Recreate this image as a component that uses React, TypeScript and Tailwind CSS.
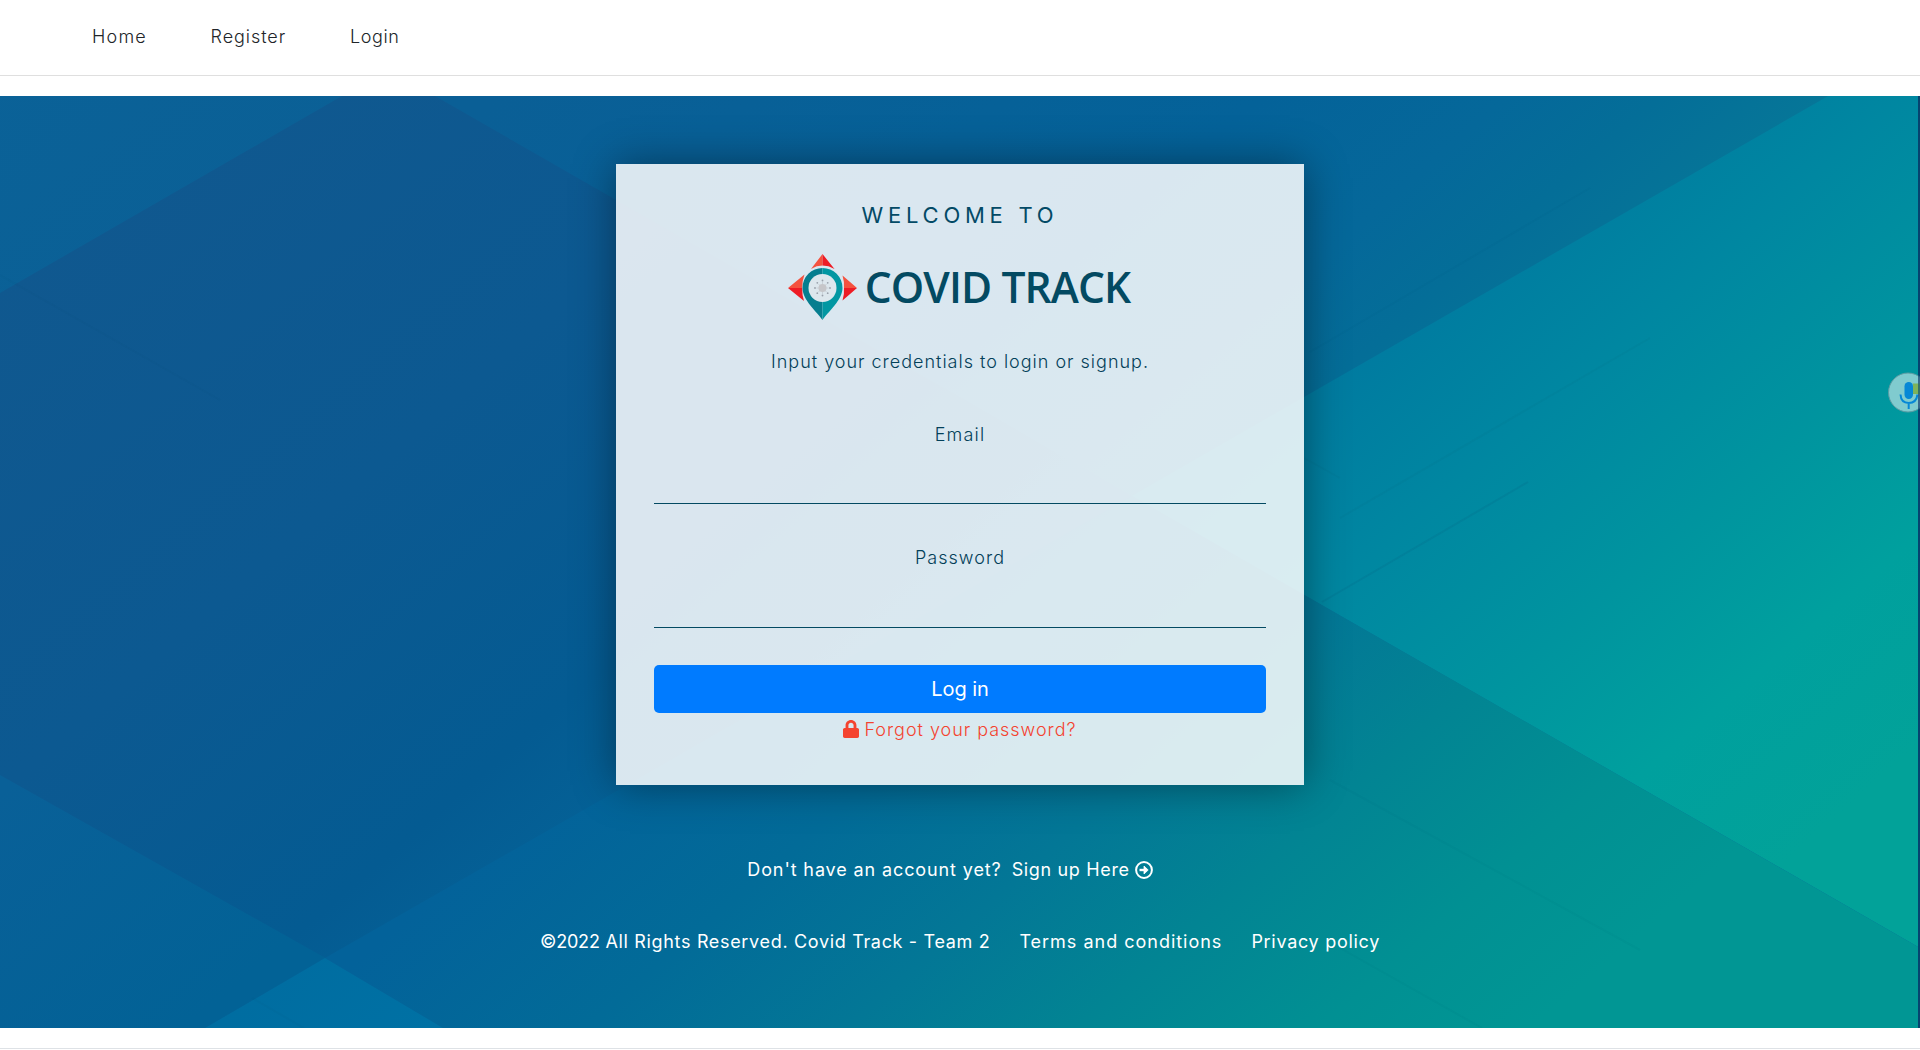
import { FaLock } from "react-icons/fa";

function Backdrop() {
  const gradients: Record<string, [number, string][]> = {
    topLeft: [[0, "#0a6298"], [0.25, "#0b5f95"]],
    diamond: [[0.1, "#10588f"], [0.3, "#0c5991"], [0.45, "#045b92"], [0.55, "#05669a"]],
    top: [[0.2, "#0a5f96"], [0.45, "#046299"], [0.53, "#05689a"], [0.58, "#046e98"], [0.64, "#067798"]],
    right: [[0.56, "#0078a0"], [0.66, "#0087a1"], [0.75, "#00949f"], [0.83, "#00a09e"], [0.91, "#02a299"]],
    bottom: [[0.48, "#03629a"], [0.58, "#026b98"], [0.665, "#037796"], [0.74, "#028493"], [0.82, "#019093"], [0.89, "#019694"]],
    left: [[0.3, "#096098"], [0.45, "#026296"]],
    tip: [[0.44, "#006ca0"], [0.53, "#0071a4"]],
  };
  return (
    <svg className="absolute inset-0 h-full w-full" viewBox="0 96 1920 932" preserveAspectRatio="none" aria-hidden="true">
      <defs>
        {Object.entries(gradients).map(([id, stops]) => (
          <linearGradient key={id} id={id} gradientUnits="userSpaceOnUse" x1="0" y1="0" x2="1310" y2="1512">
            {stops.map(([o, c]) => (
              <stop key={o} offset={o} stopColor={c} />
            ))}
          </linearGradient>
        ))}
      </defs>
      <rect x="0" y="96" width="1920" height="932" fill="url(#diamond)" />
      <path d="M0 96H342L0 293Z" fill="url(#topLeft)" />
      <path d="M435 96H1830L1132 496Z" fill="url(#top)" />
      <path d="M1829 95.500H1920V948L1131.500 496Z" fill="url(#right)" />
      <path d="M1132 496L1920 948V1028H443L325 958Z" fill="url(#bottom)" />
      <path d="M0 775L325.500 958L205 1028H0Z" fill="url(#left)" />
      <path d="M325 958L443 1028H205Z" fill="url(#tip)" />
      <g stroke="#06466b" fill="none" strokeWidth="2">
        <path d="M1322 602L1528 482" opacity=".1" />
        <path d="M1340 518L1650 338" opacity=".05" />
        <path d="M1310 352L1590 188" opacity=".03" />
        <path d="M1304 458L1340 478" opacity=".05" />
        <path d="M1340 948L1482 1028M1330 780L1640 950" opacity=".03" />
        <path d="M252 998L304 1028M0 275L220 400" opacity=".04" />
      </g>
      <rect x="1918" y="96" width="2" height="932" fill="#06436f" />
    </svg>
  );
}

function Logo() {
  return (
    <div className="mr-[2px] flex h-[66px] items-center">
      <svg className="h-[66px] w-[69px] shrink-0" viewBox="0 0 69 66" aria-hidden="true">
        <path d="M34.500 0L23 15Q28.500 11.600 34.500 11.600Z" fill="#f4523f" />
        <path d="M34.500 0L46.500 15Q40.500 11.600 34.500 11.600Z" fill="#ee1c25" />
        <path d="M0 34L16.500 20.500Q14 27 14.200 34Z" fill="#f4523f" />
        <path d="M0 34L16 47Q14 41 14.200 34Z" fill="#ee1c25" />
        <path d="M69 34L54.500 21.500Q56.500 28 56 34Z" fill="#f4523f" />
        <path d="M69 34L54.500 46.500Q56.500 40 56 34Z" fill="#ee1c25" />
        <path d="M34.500 14A20 20 0 0 0 14.500 34C14.500 46 29 58 34.500 66Z" fill="#067e8f" />
        <path d="M34.500 14A20 20 0 0 1 54.500 34C54.500 46 40 58 34.500 66Z" fill="#0297a2" />
        <circle cx="34.500" cy="34" r="14" fill="#dde7ed" />
        <g stroke="#b7bcc2">
          <path d="M34.500 28V40M28.500 34H40.500M30.500 30L38.500 38M38.500 30L30.500 38" strokeWidth=".8" opacity=".6" />
          <circle cx="34.500" cy="34" r="4" fill="#c6c6c9" stroke="none" />
          <g stroke="none" fill="#9aa1ab">
            <circle cx="34.500" cy="26.500" r=".9" />
            <circle cx="34.500" cy="41.500" r=".9" />
            <circle cx="27" cy="34" r=".9" />
            <circle cx="42" cy="34" r=".9" />
            <circle cx="29.300" cy="28.800" r=".9" />
            <circle cx="39.700" cy="28.800" r=".9" />
            <circle cx="29.300" cy="39.200" r=".9" />
            <circle cx="39.700" cy="39.200" r=".9" />
          </g>
        </g>
      </svg>
      <span className="ml-[8px] whitespace-nowrap font-['Open_Sans',sans-serif] text-[42.5px] leading-[66px] font-semibold tracking-[-0.9px] text-[#034a62]">
        COVID TRACK
      </span>
    </div>
  );
}

function VoiceBadge() {
  return (
    <svg className="absolute top-[276px] right-0 h-[42px] w-[32px]" viewBox="0 0 32 42" aria-hidden="true">
      <circle cx="20" cy="20.500" r="19.500" fill="#ffffff" fillOpacity=".5" stroke="#5c9ca3" strokeWidth="1" />
      <path d="M25 11.500H32V22H25Z" fill="#7db35c" />
      <rect x="16.500" y="10" width="8.500" height="17" rx="4.200" fill="#0688d6" />
      <path d="M12.500 22.500Q13 31 20.700 31T29.500 22.500M20.700 31V37" fill="none" stroke="#0688d6" strokeWidth="2" />
      <rect x="30" y="0" width="2" height="42" fill="#06436f" opacity=".6" />
    </svg>
  );
}

export default function App() {
  return (
    <div className="flex h-[1050px] w-full flex-col overflow-hidden bg-white font-['Inter',sans-serif] text-[18px] leading-7 font-light">
      <nav className="flex h-[76px] shrink-0 border-b border-[#dfdfdf] pt-[23px] pl-[92px] text-[#212529]">
        <a className="w-[118.500px] tracking-[1.2px]">Home</a>
        <a className="w-[139.500px] tracking-[0.95px]">Register</a>
        <a className="tracking-[0.6px]">Login</a>
      </nav>

      <main className="relative mt-5 flex h-[932px] shrink-0 flex-col items-center overflow-hidden pt-[68px]">
        <Backdrop />
        <section className="relative flex h-[621px] w-[688px] shrink-0 flex-col items-center bg-white/85 px-[38px] pt-[35px] text-[#034059] shadow-[0_0_40px_rgba(0,0,0,0.4)]">
          <h1 className="text-[22px] leading-8 font-normal tracking-[4.75px] text-[#034a66]">WELCOME TO</h1>
          <div className="mt-[23px]">
            <Logo />
          </div>
          <p className="mt-7 tracking-[0.99px]">Input your credentials to login or signup.</p>
          <label className="mt-[45px] tracking-[1.2px]">Email</label>
          <input className="h-[55px] w-full border-b border-[#034a62] bg-transparent outline-none" type="email" />
          <label className="mt-[40px] tracking-[1.05px]">Password</label>
          <input className="h-[56px] w-full border-b border-[#034a62] bg-transparent outline-none" type="password" />
          <button className="mt-[37px] h-12 w-full shrink-0 rounded-[5px] bg-[#007bff] text-[20px] font-normal tracking-[-0.1px] text-white">
            Log in
          </button>
          <a className="mt-[3px] flex items-center text-[#f4432f]">
            <FaLock className="mr-[5px] mb-[2px] h-[18px] w-4" preserveAspectRatio="none" />
            <span className="tracking-[0.97px]">Forgot your password?</span>
          </a>
        </section>

        <p className="relative mt-[71px] mr-[20px] flex items-center font-normal text-white">
          <span className="tracking-[0.88px]">Don't have an account yet?</span>
          <span className="ml-[10px] tracking-[0.65px]">Sign up Here</span>
          <svg className="mb-px ml-[5px] h-[18px] w-[18px]" viewBox="0 0 18 18" fill="none" stroke="#fff" strokeWidth="2" aria-hidden="true">
            <circle cx="9" cy="9" r="7.900" />
            <path d="M4.500 9H12" strokeWidth="2.400" />
            <path d="M9 5L13.200 9L9 13Z" fill="#fff" strokeWidth=".8" />
          </svg>
        </p>
        <footer className="relative mt-[44px] flex font-normal text-white">
          <span className="tracking-[0.67px]">
            <span className="tracking-[-0.2px]">©2022</span> All Rights Reserved. Covid Track - Team 2
          </span>
          <a className="ml-[29px] tracking-[0.99px]">Terms and conditions</a>
          <a className="ml-[29px] tracking-[0.71px]">Privacy policy</a>
        </footer>
        <VoiceBadge />
      </main>
      <div className="mt-5 border-t border-[#dee2e6]" />
    </div>
  );
}
